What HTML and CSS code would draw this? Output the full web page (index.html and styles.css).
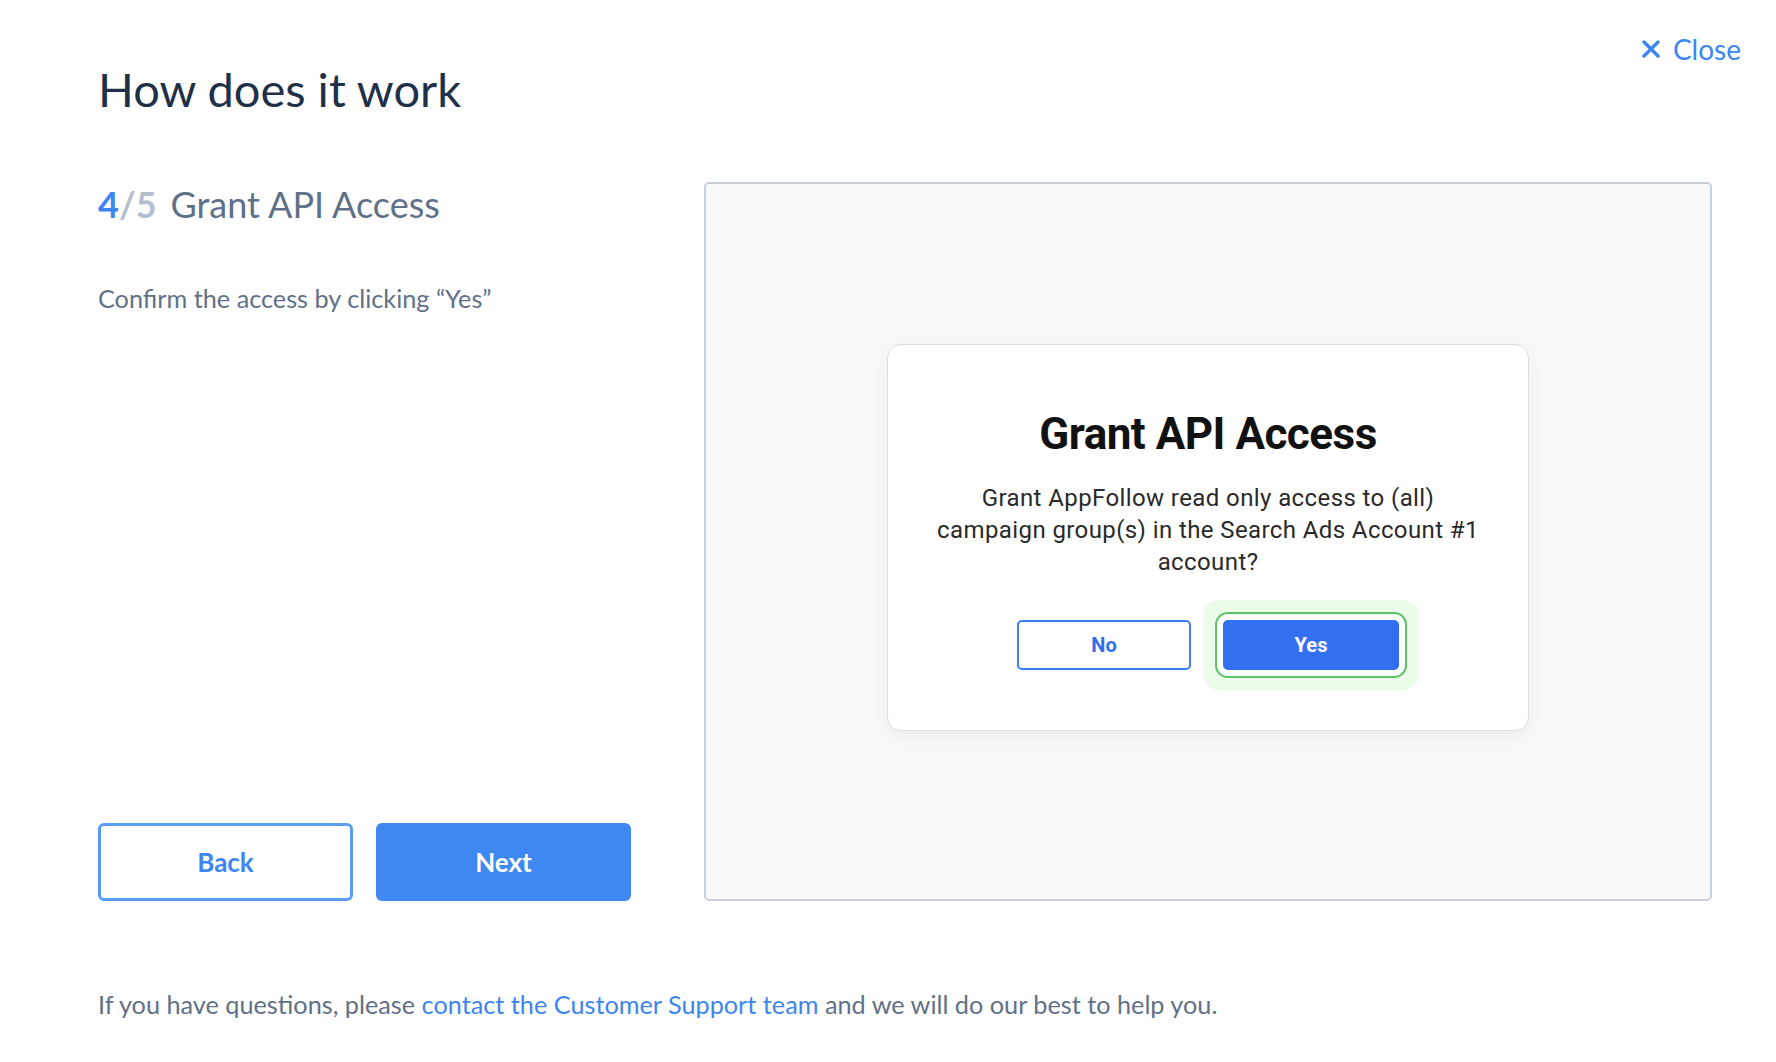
FILE: index.html
```html
<!DOCTYPE html>
<html lang="en">
<head>
<meta charset="utf-8">
<title>How does it work</title>
<link rel="stylesheet" href="styles.css">
</head>
<body>
<div class="page">
  <a class="close" href="#">
    <svg class="close-icon" viewBox="0 0 18 18" width="18" height="18" aria-hidden="true"><path d="M2 2 L16 16 M16 2 L2 16" stroke="currentColor" stroke-width="3.4" stroke-linecap="round" fill="none"/></svg>
    <span>Close</span>
  </a>
  <h1 class="title">How does it work</h1>
  <div class="main">
    <div class="left">
      <h2 class="step"><span class="step-num">4</span><span class="step-total">/5</span><span class="step-name">Grant API Access</span></h2>
      <p class="desc">Confirm the access by clicking “Yes”</p>
      <div class="actions">
        <button class="btn btn-outline">Back</button>
        <button class="btn btn-primary">Next</button>
      </div>
    </div>
    <div class="preview">
      <div class="dialog">
        <h3 class="dialog-title">Grant API Access</h3>
        <p class="dialog-text">Grant AppFollow read only access to (all)<br>campaign group(s) in the Search Ads Account #1<br>account?</p>
        <div class="dialog-actions">
          <button class="d-btn d-no">No</button>
          <span class="yes-wrap"><button class="d-btn d-yes">Yes</button></span>
        </div>
      </div>
    </div>
  </div>
  <p class="footer">If you have questions, please <a href="#">contact the Customer Support team</a> and we will do our best to help you.</p>
</div>
</body>
</html>
```

FILE: styles.css
```css
* { box-sizing: border-box; }

body {
  margin: 0;
  background: #ffffff;
  font-family: Lato, "Open Sans", sans-serif;
}

.page {
  position: relative;
  padding: 58px 64px 0 98px;
}

.close {
  position: absolute;
  top: 32px;
  right: 35px;
  display: flex;
  align-items: center;
  gap: 13px;
  color: #3d86f1;
  text-decoration: none;
  font-size: 28px;
  line-height: 34px;
}

.close-icon { display: block; }

.title {
  margin: 0;
  font-size: 47px;
  line-height: 62px;
  font-weight: 400;
  color: #1f3148;
}

.main {
  margin-top: 62px;
  display: grid;
  grid-template-columns: 533px 1008px;
  column-gap: 73px;
}

.left {
  display: flex;
  flex-direction: column;
}

.step {
  margin: 0;
  font-size: 36px;
  line-height: 44px;
  font-weight: 400;
  color: #5f7188;
}

.step-num { color: #3d86f1; font-weight: 700; }
.step-total { color: #b3bed0; font-weight: 700; margin-right: 14px; }

.desc {
  margin: 58px 0 0;
  font-size: 25.25px;
  line-height: 29px;
  color: #5f7188;
}

.actions {
  margin-top: auto;
  display: flex;
  gap: 23px;
}

.btn {
  width: 255px;
  height: 78px;
  border-radius: 6px;
  font-family: Lato, sans-serif;
  font-size: 26px;
  font-weight: 700;
  cursor: pointer;
}

.btn-outline {
  background: #ffffff;
  border: 3px solid #5a9df8;
  color: #3d86f1;
}

.btn-primary {
  background: #3f88f1;
  border: none;
  color: #ffffff;
}

.preview {
  height: 719px;
  background: #f9f9fa;
  border: 2px solid #c9d0dc;
  border-radius: 5px;
  display: flex;
  align-items: center;
  justify-content: center;
  padding-bottom: 8px;
}

.dialog {
  width: 642px;
  height: 387px;
  background: #ffffff;
  border: 1px solid #dedede;
  border-radius: 14px;
  box-shadow: 0 6px 18px rgba(0, 0, 0, 0.05);
  padding-top: 63px;
  text-align: center;
  font-family: Roboto, Inter, sans-serif;
}

.dialog-title {
  margin: 0;
  font-size: 44px;
  line-height: 52px;
  font-weight: 700;
  color: #111111;
  letter-spacing: -0.5px;
}

.dialog-text {
  margin: 22px 0 0;
  font-size: 24px;
  line-height: 32px;
  letter-spacing: 0.4px;
  color: #2a2a2a;
}

.dialog-actions {
  margin-top: 42px;
  display: flex;
  justify-content: center;
  gap: 32px;
}

.d-btn {
  height: 50px;
  border-radius: 5px;
  font-family: Roboto, Inter, sans-serif;
  font-size: 20px;
  font-weight: 700;
  cursor: pointer;
}

.d-no {
  width: 174px;
  background: #ffffff;
  border: 2px solid #3d7ef5;
  color: #2f6ff0;
}

.yes-wrap {
  position: relative;
  z-index: 0;
  display: block;
}

.yes-wrap::before {
  content: "";
  position: absolute;
  inset: -20px;
  background: #ebfce8;
  border-radius: 16px;
  z-index: -1;
}

.d-yes {
  display: block;
  width: 176px;
  background: #3370f1;
  border: none;
  color: #ffffff;
  box-shadow: 0 0 0 6px #ffffff, 0 0 0 8px #5ec46c;
}

.footer {
  margin: 89px 0 0;
  font-size: 25.25px;
  line-height: 29px;
  color: #5f7188;
}

.footer a {
  color: #3d86f1;
  text-decoration: none;
}
```
